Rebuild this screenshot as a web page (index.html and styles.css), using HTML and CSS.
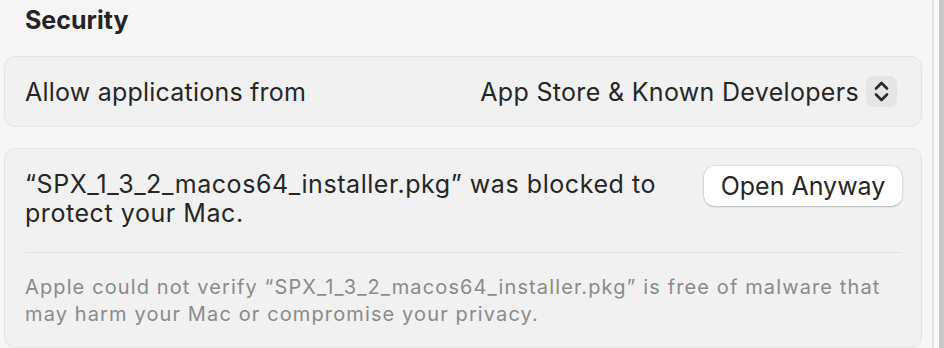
FILE: index.html
```html
<!DOCTYPE html>
<html lang="en">
<head>
<meta charset="utf-8">
<title>Security</title>
<link rel="stylesheet" href="styles.css">
</head>
<body>
<div class="window">
  <main class="content">
    <h2 class="section-title">Security</h2>
    <div class="card row">
      <span class="label">Allow applications from</span>
      <div class="popup">
        <span class="popup-value">App Store &amp; Known Developers</span>
        <span class="stepper">
          <svg width="31" height="31" viewBox="0 0 31 31" aria-hidden="true">
            <path d="M10 12.5 L15.5 7 L21 12.5 M10 18.5 L15.5 24 L21 18.5" fill="none" stroke="#2a2a2a" stroke-width="2.6" stroke-linecap="round" stroke-linejoin="round"/>
          </svg>
        </span>
      </div>
    </div>
    <div class="card blocked">
      <div class="blocked-head">
        <p class="msg">“SPX_1_3_2_macos64_installer.pkg” was blocked to protect your Mac.</p>
        <button class="btn" type="button">Open Anyway</button>
      </div>
      <div class="divider"></div>
      <p class="note">Apple could not verify “SPX_1_3_2_macos64_installer.pkg” is free of malware that may harm your Mac or compromise your privacy.</p>
    </div>
  </main>
  <div class="scrollbar">
    <div class="track-edge"></div>
    <div class="track"></div>
    <div class="thumb"></div>
  </div>
</div>
</body>
</html>
```

FILE: styles.css
```css
* { box-sizing: border-box; }
html, body {
  margin: 0;
  padding: 0;
  background: #f6f6f6;
}
body {
  font-family: Inter, "Noto Sans", "Liberation Sans", sans-serif;
  color: #262626;
  overflow: hidden;
}
.window {
  display: flex;
  width: 944px;
  height: 348px;
}
.content {
  flex: 1;
  padding: 0 10px 0 4px;
}
.section-title {
  margin: 0;
  padding: 5px 0 0 21px;
  height: 56px;
  font-size: 25px;
  font-weight: 700;
  line-height: 30px;
  color: #242424;
}
.card {
  background: #f1f1f1;
  border: 1px solid #e4e4e4;
  border-radius: 11px;
}
.row {
  height: 71px;
  display: flex;
  align-items: center;
  justify-content: space-between;
  padding: 0 24px 0 20px;
  font-size: 25px;
}
.label {
  letter-spacing: 0.22px;
}
.popup {
  display: flex;
  align-items: center;
  gap: 7px;
}
.popup-value {
  letter-spacing: 0.32px;
}
.stepper {
  width: 31px;
  height: 31px;
  border-radius: 7px;
  background: #e5e5e5;
  display: flex;
}
.blocked {
  margin-top: 21px;
  height: 200px;
  padding: 17px 19px 0 20px;
}
.blocked-head {
  display: flex;
  align-items: flex-start;
  gap: 30px;
}
.msg {
  flex: 1;
  margin: 4px 0 0;
  font-size: 25px;
  line-height: 29px;
  letter-spacing: 0.56px;
}
.btn {
  width: 198px;
  height: 40px;
  border: none;
  border-radius: 10px;
  background: #ffffff;
  box-shadow: 0 0 0 0.5px rgba(0,0,0,0.12), 0 1px 2px rgba(0,0,0,0.18);
  font-family: inherit;
  font-size: 25px;
  color: #262626;
  padding: 0;
}
.divider {
  height: 1px;
  background: #e2e2e2;
  margin: 24px 0 0;
}
.note {
  margin: 21px 0 0;
  font-size: 20px;
  line-height: 27px;
  color: #8a8a8a;
  letter-spacing: 1.12px;
}
.scrollbar {
  width: 12px;
  display: flex;
}
.track-edge {
  width: 2px;
  background: #e6e6e6;
}
.track {
  width: 5px;
  background: #f9f9f9;
}
.thumb {
  width: 5px;
  background: #c7c7c7;
}
```
